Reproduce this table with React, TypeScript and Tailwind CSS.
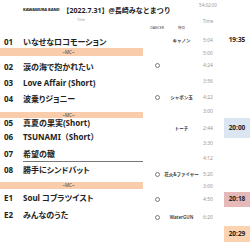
const FONT = { fontFamily: '"Noto Sans", "Noto Sans CJK JP", sans-serif' };

type Song = {
  no?: string;
  title: string;
  h: number;
  pb: number;
  mc?: boolean;
  rule?: boolean;
  wide?: boolean;
};

// left side: song numbers and titles
const songs: Song[] = [
  { no: "01", title: "いなせなロコモーション", h: 14, pb: 1 },
  { title: "~MC~", h: 9, pb: 0, mc: true },
  { no: "02", title: "涙の海で抱かれたい", h: 16, pb: 1 },
  { no: "03", title: "Love Affair (Short)", h: 16, pb: 1 },
  { no: "04", title: "波乗りジョニー", h: 23, pb: 8 },
  { title: "~MC~", h: 7, pb: 0, mc: true },
  { no: "05", title: "真夏の果実(Short)", h: 9, pb: 0 },
  { no: "06", title: "TSUNAMI（Short）", h: 15, pb: 1, wide: true },
  { no: "07", title: "希望の轍", h: 20, pb: 4, rule: true },
  { no: "08", title: "勝手にシンドバット", h: 19, pb: 7 },
  { title: "~MC~", h: 8, pb: 0, mc: true },
  { no: "E1", title: "Soul コブラツイスト", h: 14, pb: 1 },
  { no: "E2", title: "みんなのうた", h: 17, pb: 1 },
];

type Cue = {
  h: number;
  dancer?: boolean;
  fx?: string;
  time?: string;
  total?: string;
  tone?: string;
  boxH?: number;
};

// right side: dancer, effects, song length and running clock
const cues: Cue[] = [
  { h: 14, fx: "キャノン", time: "5:04", total: "19:35" },
  { h: 12, time: "5:00" },
  { h: 13, dancer: true, time: "4:24" },
  { h: 18, time: "3:56" },
  { h: 15, dancer: true, fx: "シャボン玉", time: "4:22" },
  { h: 13, time: "3:00" },
  { h: 20, fx: "トーチ", time: "2:44", total: "20:00", tone: "bg-[#dce6f2]", boxH: 20 },
  { h: 11, time: "3:30" },
  { h: 18, time: "4:12" },
  { h: 15, dancer: true, fx: "花火&ファイヤー", time: "5:20" },
  { h: 9, time: "3:00" },
  { h: 17, dancer: true, time: "4:50", total: "20:18", tone: "bg-[#e6b8b7]", boxH: 15 },
  { h: 18, dancer: true, fx: "WaterGUN", time: "6:20" },
  { h: 16, total: "20:29", tone: "bg-[#fbd3b0]", boxH: 16 },
];

const Dot = () => (
  <div className="w-[5px] h-[5px] rounded-full border-[1.5px] border-[#7a7a7a]" />
);

export default function App() {
  return (
    <div className="w-[250px] h-[242px] bg-white overflow-hidden text-[#222]" style={FONT}>
      {/* header */}
      <div className="grid grid-cols-[143px_28px_21px_32px_26px] grid-rows-[15px_9px_9px] h-[33px]">
        <div className="col-span-3 pl-[23px] pt-[5px] flex items-center gap-[3px] whitespace-nowrap">
          <span className="text-[4px] font-black tracking-[-0.1px] text-[#333]">KAWAMURA BAND</span>
          <span className="text-[7px] font-bold leading-none">【2022.7.31】@長崎みなとまつり</span>
        </div>
        <div className="pt-[3px] text-[4.5px] text-[#999] text-center leading-none">54:02:00</div>
        <div />

        <div className="pl-[77px] pt-[3px] text-[4px] text-[#999] leading-none">Title</div>
        <div />
        <div />
        <div className="pt-[4px] text-[4.5px] text-[#999] text-center leading-none">Time</div>
        <div />

        <div />
        <div className="pt-[2px] text-[3.5px] text-[#444] text-center leading-none">DANCER</div>
        <div className="pt-[2px] text-[3.5px] text-[#444] text-center leading-none">特効</div>
        <div />
        <div />
      </div>

      <div className="flex">
        <div className="w-[143px] flex flex-col">
          {songs.map((s, i) =>
            s.mc ? (
              <div
                key={i}
                className="flex items-center justify-center bg-[#f9cdab] text-[4.5px] text-[#444] leading-none pr-[6px] mt-[1px]"
                style={{ height: s.h - 1 }}
              >
                {s.title}
              </div>
            ) : (
              <div
                key={i}
                className="flex items-end text-[8px] font-bold leading-none whitespace-nowrap"
                style={{ height: s.h, paddingBottom: s.pb }}
              >
                <span className="w-[23px] pl-[4px]">{s.no}</span>
                <span
                  className={`${s.wide ? "" : "[font-feature-settings:'palt']"} ${
                    s.rule ? "flex-1 border-b border-[#777] pb-[3px] -mb-[4px]" : ""
                  }`}
                >
                  {s.title}
                </span>
              </div>
            )
          )}
        </div>

        <div className="flex-1 flex flex-col">
          {cues.map((c, i) => (
            <div
              key={i}
              className="grid grid-cols-[28px_21px_32px_26px] items-center"
              style={{ height: c.h }}
            >
              <div className="flex justify-center">{c.dancer && <Dot />}</div>
              <div className="flex justify-center whitespace-nowrap text-[4.5px] font-semibold text-[#333] leading-none">
                {c.fx}
              </div>
              <div className="text-center text-[5px] text-[#999] leading-none">{c.time}</div>
              <div className="h-full flex items-center">
                {c.total && (
                  <div
                    className={`w-full flex items-center justify-center text-[6.5px] font-bold text-[#222] leading-none ${c.tone ?? ""}`}
                    style={{ height: c.boxH ?? c.h }}
                  >
                    {c.total}
                  </div>
                )}
              </div>
            </div>
          ))}
        </div>
      </div>
    </div>
  );
}
